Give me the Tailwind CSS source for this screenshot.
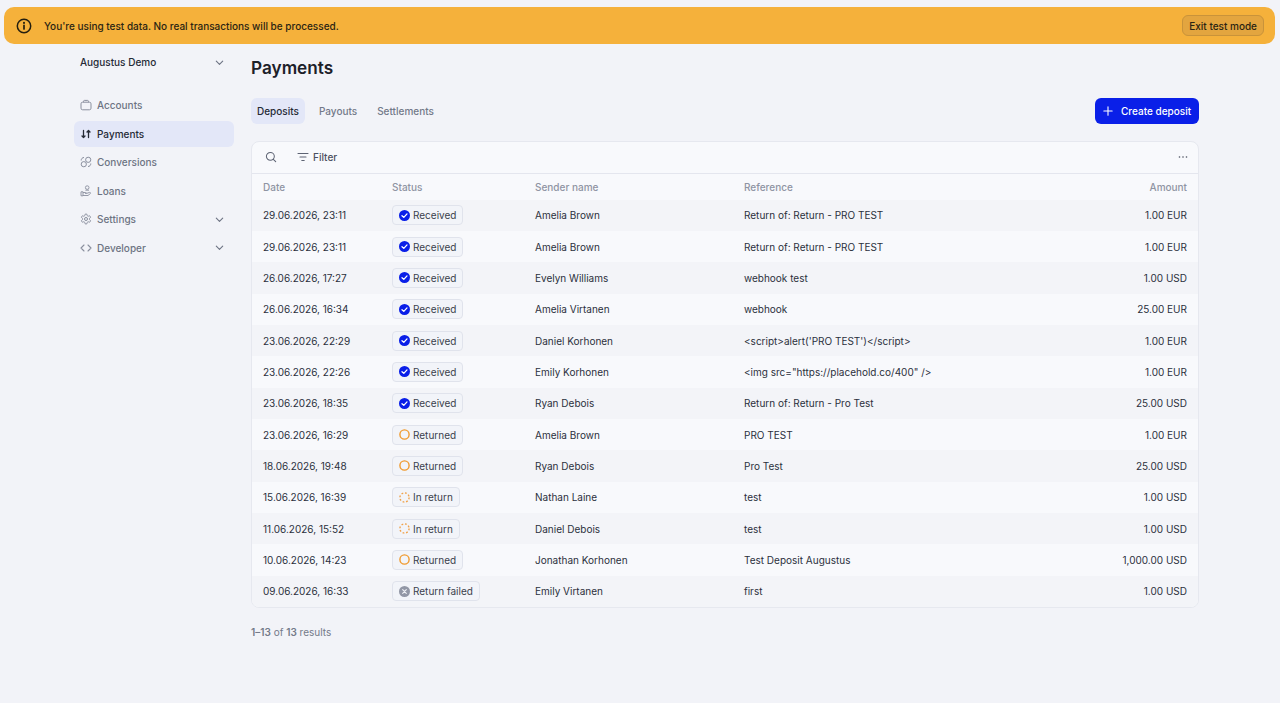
<!DOCTYPE html>
<html lang="en">
<head>
    <meta charset="UTF-8">
    <title>Payments</title>
    <script src="https://cdn.jsdelivr.net/npm/@tailwindcss/browser@4"></script>
</head>

<body class="bg-[#f2f3f8] font-['Inter',sans-serif] text-[10px] leading-4 text-[#1f2430] antialiased">
    <div class="h-[703px] overflow-hidden pt-[7px]">
        <!-- test mode banner -->
        <div class="ml-[4px] mr-[5px] flex h-[37px] items-center justify-between rounded-[10px] bg-[#f5b13b] pl-[12px] pr-[11px]">
            <div class="flex items-center gap-[12px] font-medium text-[#2a2413]">
                <svg class="h-[16px] w-[16px]" viewBox="0 0 16 16" fill="none" stroke="#241f10" stroke-width="1.5" stroke-linecap="round">
                    <circle cx="8" cy="8" r="6.7" />
                    <path d="M8 7.4v3.6" stroke-width="1.7" />
                    <path d="M8 4.8v.2" stroke-width="2" />
                </svg>
                <span>You're using test data. No real transactions will be processed.</span>
            </div>
            <button class="flex h-[21px] items-center rounded-[6px] border border-[#c9933a] bg-[#e3a53f] px-[6px] font-medium text-[#2a2413]">Exit test mode</button>
        </div>

        <div class="ml-[74px] flex">
            <!-- sidebar -->
            <aside class="w-[160px] shrink-0 font-medium text-[#6d7383]">
                <div class="flex h-[36px] items-center justify-between pl-[6px] pr-[9px] text-[#252a36]">
                    <span>Augustus Demo</span>
                    <svg class="h-[11px] w-[11px]" viewBox="0 0 12 12" fill="none" stroke="#6d7383" stroke-width="1.2" stroke-linecap="round" stroke-linejoin="round"><path d="M2.5 4.5 6 8l3.5-3.5" /></svg>
                </div>
                <nav class="mt-[12px] flex flex-col gap-[2.5px]">
                    <a class="flex h-[26px] items-center gap-[5px] px-[6px]">
                        <svg class="h-[12px] w-[12px]" viewBox="0 0 12 12" fill="none" stroke="#8a8f9e" stroke-width="1"><rect x="1" y="3.2" width="10" height="7.6" rx="1.6" /><path d="M3.5 3.2V2.4c0-.6.4-1 1-1h3c.6 0 1 .4 1 1v.8" /></svg>
                        Accounts
                    </a>
                    <a class="flex h-[26px] items-center gap-[5px] rounded-[6px] bg-[#e3e7f8] px-[6px] text-[#252a36]">
                        <svg class="h-[12px] w-[12px]" viewBox="0 0 12 12" fill="none" stroke="#252a36" stroke-width="1.3" stroke-linecap="round" stroke-linejoin="round"><path d="M3.500 2.500v7M2 8l1.500 1.500L5 8M8.500 9.500v-7M7 4l1.500-1.500L10 4" /></svg>
                        Payments
                    </a>
                    <a class="flex h-[26px] items-center gap-[5px] px-[6px]">
                        <svg class="h-[12px] w-[12px]" viewBox="0 0 12 12" fill="none" stroke="#8a8f9e" stroke-width="1"><circle cx="3.8" cy="8.2" r="2.6" /><circle cx="8.2" cy="3.8" r="2.6" /><path d="M1.2 4.5C1.2 2.7 2.4 1.5 4 1.500M10.800 7.500c0 1.800-1.200 3-2.800 3" /></svg>
                        Conversions
                    </a>
                    <a class="flex h-[26px] items-center gap-[5px] px-[6px]">
                        <svg class="h-[12px] w-[12px]" viewBox="0 0 12 12" fill="none" stroke="#8a8f9e" stroke-width=".9"><circle cx="7.200" cy="2.600" r="1.800" /><path d="M5.400 5.200h3.600M1 6.800h2v4H1zM3 7.500h2.600c.6 0 1 .4 1 .9H5M6.600 8.400l3-1c.7-.2 1.300.6.8 1.100L8 10.500H3" /></svg>
                        Loans
                    </a>
                    <a class="flex h-[26px] items-center gap-[5px] px-[6px]">
                        <svg class="h-[12px] w-[12px]" viewBox="0 0 24 24" fill="none" stroke="#8a8f9e" stroke-width="2" stroke-linejoin="round"><path d="M12.220 2h-.44a2 2 0 0 0-2 2v.18a2 2 0 0 1-1 1.730l-.43.25a2 2 0 0 1-2 0l-.15-.08a2 2 0 0 0-2.730.73l-.22.38a2 2 0 0 0 .73 2.730l.15.1a2 2 0 0 1 1 1.720v.51a2 2 0 0 1-1 1.740l-.15.09a2 2 0 0 0-.73 2.730l.22.38a2 2 0 0 0 2.730.73l.15-.08a2 2 0 0 1 2 0l.43.25a2 2 0 0 1 1 1.730V20a2 2 0 0 0 2 2h.44a2 2 0 0 0 2-2v-.18a2 2 0 0 1 1-1.730l.43-.25a2 2 0 0 1 2 0l.15.08a2 2 0 0 0 2.730-.73l.22-.39a2 2 0 0 0-.73-2.730l-.15-.08a2 2 0 0 1-1-1.740v-.5a2 2 0 0 1 1-1.740l.15-.09a2 2 0 0 0 .73-2.730l-.22-.38a2 2 0 0 0-2.730-.73l-.15.08a2 2 0 0 1-2 0l-.43-.25a2 2 0 0 1-1-1.730V4a2 2 0 0 0-2-2z" /><circle cx="12" cy="12" r="3" /></svg>
                        <span class="grow">Settings</span>
                        <svg class="mr-[3px] h-[11px] w-[11px]" viewBox="0 0 12 12" fill="none" stroke="#6d7383" stroke-width="1.2" stroke-linecap="round" stroke-linejoin="round"><path d="M2.500 4.500 6 8l3.500-3.500" /></svg>
                    </a>
                    <a class="flex h-[26px] items-center gap-[5px] px-[6px]">
                        <svg class="h-[12px] w-[12px]" viewBox="0 0 12 12" fill="none" stroke="#8a8f9e" stroke-width="1.100" stroke-linecap="round" stroke-linejoin="round"><path d="M4 3 1 6l3 3M8 3l3 3-3 3" /></svg>
                        <span class="grow">Developer</span>
                        <svg class="mr-[3px] h-[11px] w-[11px]" viewBox="0 0 12 12" fill="none" stroke="#6d7383" stroke-width="1.2" stroke-linecap="round" stroke-linejoin="round"><path d="M2.500 4.500 6 8l3.500-3.500" /></svg>
                    </a>
                </nav>
            </aside>

            <!-- main -->
            <main class="ml-[17px] w-[948px]">
                <h1 class="mt-[12px] h-[24px] text-[17.2px] leading-[24px] font-semibold text-[#1c2029]">Payments</h1>
                <div class="mt-[18px] flex h-[26px] items-center justify-between">
                    <div class="flex items-center gap-[8px] font-medium text-[#737989]">
                        <a class="flex h-[26px] items-center rounded-[6px] bg-[#e3e7f8] px-[6px] text-[#252a36]">Deposits</a>
                        <a class="flex h-[26px] items-center px-[6px]">Payouts</a>
                        <a class="flex h-[26px] items-center px-[6px]">Settlements</a>
                    </div>
                    <button class="flex h-[26px] w-[104px] items-center gap-[8px] whitespace-nowrap rounded-[6px] bg-[#0a1fe8] pl-[8px] font-medium text-white">
                        <svg class="h-[10px] w-[10px]" viewBox="0 0 12 12" fill="none" stroke="#fff" stroke-width="1.300" stroke-linecap="round"><path d="M6 1v10M1 6h10" /></svg>
                        Create deposit
                    </button>
                </div>

                <div class="mt-[17px] overflow-hidden rounded-[8px] border border-[#e6e8ef] bg-[#f8f9fc]">
                    <div class="flex h-[32px] items-center border-b border-[#e4e6ee] pb-[1px] pl-[13px] pr-[10px]">
                        <svg class="h-[12px] w-[12px]" viewBox="0 0 13 13" fill="none" stroke="#5d6373" stroke-width="1.100" stroke-linecap="round"><circle cx="5.800" cy="5.800" r="4.300" /><path d="m9 9 2.600 2.600" /></svg>
                        <svg class="ml-[20px] h-[12px] w-[12px]" viewBox="0 0 12 12" fill="none" stroke="#5d6373" stroke-width="1.100" stroke-linecap="round"><path d="M1 2.500h10M3 6h6M4.800 9.500h2.400" /></svg>
                        <span class="ml-[4px] grow font-medium text-[#4b5060]">Filter</span>
                        <svg class="h-[10px] w-[10px]" viewBox="0 0 10 10" fill="#4b5060"><circle cx="1.500" cy="5" r=".8" /><circle cx="5" cy="5" r=".8" /><circle cx="8.500" cy="5" r=".8" /></svg>
                    </div>
                    <div class="flex h-[25.5px] items-center pl-[11px] pr-[11px] font-medium text-[#8f94a3]">
                        <div class="w-[129px]">Date</div>
                        <div class="w-[143px]">Status</div>
                        <div class="w-[209px]">Sender name</div>
                        <div class="grow">Reference</div>
                        <div>Amount</div>
                    </div>
                    <div id="rows"></div>
                </div>

                <p class="mt-[16.5px] text-[#747a89]"><span class="font-semibold">1–13</span> of <span class="font-semibold">13</span> results</p>
            </main>
        </div>
    </div>

    <script>
        const icons = {
            received: '<svg class="h-[11px] w-[11px]" viewBox="0 0 11 11"><circle cx="5.500" cy="5.500" r="5.500" fill="#0a1fe8" /><path d="M3 5.700 4.800 7.400 8 3.900" fill="none" stroke="#fff" stroke-width="1.300" stroke-linecap="round" stroke-linejoin="round" /></svg>',
            returned: '<svg class="h-[11px] w-[11px]" viewBox="0 0 11 11"><circle cx="5.500" cy="5.500" r="4.600" fill="none" stroke="#f09a2e" stroke-width="1.400" /></svg>',
            inreturn: '<svg class="h-[11px] w-[11px]" viewBox="0 0 11 11"><circle cx="5.500" cy="5.500" r="4.600" fill="none" stroke="#f0a24a" stroke-width="1.400" stroke-dasharray="1.800 1.800" /></svg>',
            failed: '<svg class="h-[11px] w-[11px]" viewBox="0 0 11 11"><circle cx="5.500" cy="5.500" r="5.500" fill="#9297a6" /><path d="m3.700 3.700 3.600 3.600M7.300 3.700 3.700 7.300" stroke="#eceef3" stroke-width="1.200" stroke-linecap="round" /></svg>'
        };
        const statusLabel = { received: 'Received', returned: 'Returned', inreturn: 'In return', failed: 'Return failed' };

        const rows = [
            ['29.06.2026, 23:11', 'received', 'Amelia Brown', 'Return of: Return - PRO TEST', '1.00 EUR'],
            ['29.06.2026, 23:11', 'received', 'Amelia Brown', 'Return of: Return - PRO TEST', '1.00 EUR'],
            ['26.06.2026, 17:27', 'received', 'Evelyn Williams', 'webhook test', '1.00 USD'],
            ['26.06.2026, 16:34', 'received', 'Amelia Virtanen', 'webhook', '25.00 EUR'],
            ['23.06.2026, 22:29', 'received', 'Daniel Korhonen', "&lt;script&gt;alert('PRO TEST')&lt;/script&gt;", '1.00 EUR'],
            ['23.06.2026, 22:26', 'received', 'Emily Korhonen', '&lt;img src="https://placehold.co/400" /&gt;', '1.00 EUR'],
            ['23.06.2026, 18:35', 'received', 'Ryan Debois', 'Return of: Return - Pro Test', '25.00 USD'],
            ['23.06.2026, 16:29', 'returned', 'Amelia Brown', 'PRO TEST', '1.00 EUR'],
            ['18.06.2026, 19:48', 'returned', 'Ryan Debois', 'Pro Test', '25.00 USD'],
            ['15.06.2026, 16:39', 'inreturn', 'Nathan Laine', 'test', '1.00 USD'],
            ['11.06.2026, 15:52', 'inreturn', 'Daniel Debois', 'test', '1.00 USD'],
            ['10.06.2026, 14:23', 'returned', 'Jonathan Korhonen', 'Test Deposit Augustus', '1,000.00 USD'],
            ['09.06.2026, 16:33', 'failed', 'Emily Virtanen', 'first', '1.00 USD']
        ];

        document.getElementById('rows').innerHTML = rows.map((r, i) => `
            <div class="flex h-[31.35px] items-center pl-[11px] pr-[11px] text-[#2b303c] ${i % 2 == 0 ? 'bg-[#f3f4f8]' : 'bg-[#f8f9fc]'}">
                <div class="w-[129px]">${r[0]}</div>
                <div class="w-[143px]">
                    <span class="inline-flex h-[20px] items-center gap-[3px] rounded-[4px] border border-[#e0e3ec] bg-[#f2f4f9] pl-[6px] pr-[6px] font-normal text-[#3a3f4c]">${icons[r[1]]}${statusLabel[r[1]]}</span>
                </div>
                <div class="w-[209px]">${r[2]}</div>
                <div class="grow">${r[3]}</div>
                <div>${r[4]}</div>
            </div>`).join('');
    </script>
</body>

</html>
